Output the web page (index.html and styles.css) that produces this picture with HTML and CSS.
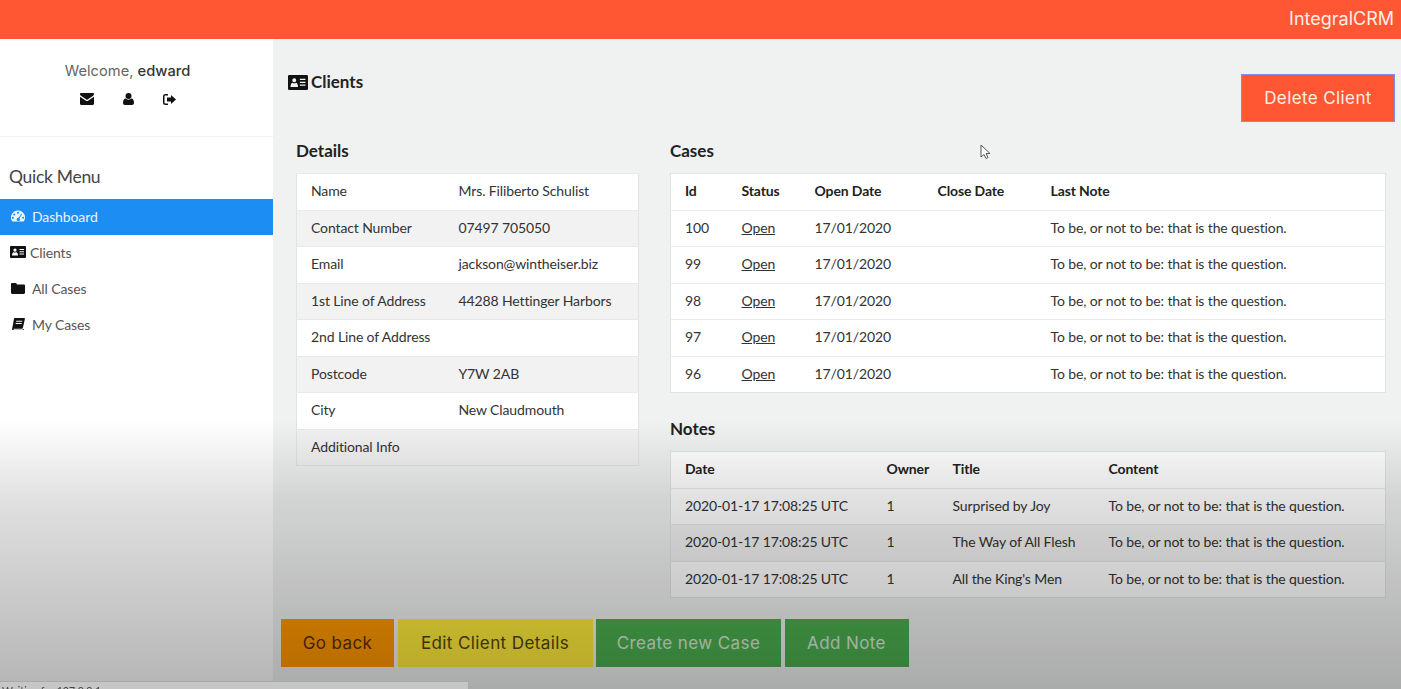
FILE: index.html
```html
<!DOCTYPE html>
<html lang="en">
<head>
<meta charset="UTF-8">
<title>IntegralCRM - Clients</title>
<link rel="stylesheet" href="styles.css">
</head>
<body>

<header class="topbar">IntegralCRM</header>

<div class="page">

	<aside class="sidebar">
		<div class="profile">
			<p class="welcome">Welcome, <b>edward</b></p>
			<div class="profile-icons">
				<svg class="icon" width="14" height="12" viewBox="0 0 14 12"><path d="M0 1.2C0 .5.5 0 1.2 0h11.6c.7 0 1.2.5 1.2 1.2 0 .6-.4 1.1-.9 1.5L7.6 6.6c-.4.3-.8.3-1.2 0L.9 2.7C.4 2.3 0 1.8 0 1.2zM0 3.7l6 4c.6.4 1.4.4 2 0l6-4v7.1c0 .7-.5 1.2-1.2 1.2H1.2C.5 12 0 11.500 0 10.800z"/></svg>
				<svg class="icon" width="11" height="12" viewBox="0 0 11 12"><circle cx="5.500" cy="3" r="3"/><path d="M0 10c0-3 1-4.500 2.700-4.500C3.500 6.200 4.400 6.700 5.500 6.700s2-.5 2.800-1.200C10 5.500 11 7 11 10c0 1.300-.8 2-2 2H2c-1.200 0-2-.7-2-2z"/></svg>
				<svg class="icon" width="13" height="11" viewBox="0 0 13 11"><path d="M5 1.500H2.500c-.6 0-1 .4-1 1v6c0 .6.400 1 1 1H5V11H2.500A2.500 2.500 0 0 1 0 8.500v-6A2.500 2.500 0 0 1 2.500 0H5zM8 1l5 4.500L8 10V7.500H4v-4h4z"/></svg>
			</div>
		</div>
		<h2 class="menu-title">Quick Menu</h2>
		<nav class="menu">
			<a class="menu-item active" href="#">
				<svg class="icon" width="14" height="12" viewBox="0 0 15 12"><path fill-rule="evenodd" d="M7.500 0A7.500 7.500 0 0 0 1.500 12h12A7.500 7.500 0 0 0 7.500 0zM7.500 1.500a1.100 1.100 0 1 1 0 2.200 1.100 1.100 0 0 1 0-2.200zM3.500 3.200a1.100 1.100 0 1 1 0 2.200 1.100 1.100 0 0 1 0-2.200zM2 6.800a1.100 1.100 0 1 1 0 2.200 1.100 1.100 0 0 1 0-2.200zM13 6.800a1.100 1.100 0 1 1 0 2.200 1.100 1.100 0 0 1 0-2.200zM11 3.600l.8.5-2.700 4.300a1.800 1.800 0 1 1-.9-.5z"/></svg>
				Dashboard
			</a>
			<a class="menu-item" href="#">
				<svg class="icon icon-card" width="16" height="12" viewBox="0 0 16 12"><path fill-rule="evenodd" d="M1 0h14a1 1 0 0 1 1 1v10a1 1 0 0 1-1 1H1a1 1 0 0 1-1-1V1a1 1 0 0 1 1-1zM5 2.500a1.600 1.600 0 1 0 0 3.200 1.600 1.600 0 0 0 0-3.200zM2 9.500h6c0-2-.8-3.300-1.600-3.300-.4.300-.9.400-1.400.4s-1-.1-1.400-.4C2.800 6.200 2 7.500 2 9.500zM9.500 3v1H14V3zM9.500 5.300v1H14v-1zM9.500 7.600v1H14v-1z"/></svg>
				Clients
			</a>
			<a class="menu-item" href="#">
				<svg class="icon" width="14" height="11" viewBox="0 0 14 11"><path d="M1.200 0h3.300c.6 0 1 .3 1.300.9l.3.600h7c.5 0 .9.400.9.900v7.400c0 .7-.5 1.200-1.200 1.200H1.200C.5 11 0 10.500 0 9.800V1.200C0 .5.500 0 1.200 0z"/></svg>
				All Cases
			</a>
			<a class="menu-item" href="#">
				<svg class="icon icon-book" width="13" height="12" viewBox="0 0 13 12"><path fill-rule="evenodd" d="M3 0h9.200c.6 0 .8.400.7 1l-2 8.800c-.1.600-.5.900-1 .9H2.200c-.6 0-.9.300-.9.500s.3.500.8.500h8.700l.4-.8.800.4-.5 1.200c-.1.300-.3.500-.7.500H2c-1.300 0-2-.8-1.900-1.900L1.900 1.200C2 .5 2.400 0 3 0zM4.300 2.800l-.2 1h6l.2-1zM3.800 5l-.2 1h6l.2-1z"/></svg>
				My Cases
			</a>
		</nav>
	</aside>

	<main class="content">
		<div class="title-row">
			<h1 class="page-title">
				<svg class="icon" width="20" height="15" viewBox="0 0 16 12"><path fill-rule="evenodd" d="M1 0h14a1 1 0 0 1 1 1v10a1 1 0 0 1-1 1H1a1 1 0 0 1-1-1V1a1 1 0 0 1 1-1zM5 2.500a1.600 1.600 0 1 0 0 3.200 1.600 1.600 0 0 0 0-3.200zM2 9.500h6c0-2-.8-3.300-1.600-3.300-.4.300-.9.400-1.400.4s-1-.1-1.400-.4C2.800 6.200 2 7.500 2 9.500zM9.500 3v1H14V3zM9.500 5.300v1H14v-1zM9.500 7.600v1H14v-1z"/></svg>
				Clients
			</h1>
			<a class="btn btn-delete" href="#">Delete Client</a>
		</div>

		<div class="columns">
			<section class="col-details">
				<h3 class="section-title">Details</h3>
				<table class="data striped">
					<colgroup><col class="w148"><col></colgroup>
					<tr><td>Name</td><td>Mrs. Filiberto Schulist</td></tr>
					<tr><td>Contact Number</td><td>07497 705050</td></tr>
					<tr><td>Email</td><td>jackson@wintheiser.biz</td></tr>
					<tr><td>1st Line of Address</td><td>44288 Hettinger Harbors</td></tr>
					<tr><td>2nd Line of Address</td><td></td></tr>
					<tr><td>Postcode</td><td>Y7W 2AB</td></tr>
					<tr><td>City</td><td>New Claudmouth</td></tr>
					<tr><td>Additional Info</td><td></td></tr>
				</table>
			</section>

			<section class="col-lists">
				<h3 class="section-title">Cases</h3>
				<table class="data">
					<colgroup><col class="w57"><col class="w73"><col class="w123"><col class="w113"><col></colgroup>
					<thead>
						<tr><th>Id</th><th>Status</th><th>Open Date</th><th>Close Date</th><th>Last Note</th></tr>
					</thead>
					<tbody>
						<tr><td>100</td><td><a href="#">Open</a></td><td>17/01/2020</td><td></td><td>To be, or not to be: that is the question.</td></tr>
						<tr><td>99</td><td><a href="#">Open</a></td><td>17/01/2020</td><td></td><td>To be, or not to be: that is the question.</td></tr>
						<tr><td>98</td><td><a href="#">Open</a></td><td>17/01/2020</td><td></td><td>To be, or not to be: that is the question.</td></tr>
						<tr><td>97</td><td><a href="#">Open</a></td><td>17/01/2020</td><td></td><td>To be, or not to be: that is the question.</td></tr>
						<tr><td>96</td><td><a href="#">Open</a></td><td>17/01/2020</td><td></td><td>To be, or not to be: that is the question.</td></tr>
					</tbody>
				</table>

				<h3 class="section-title notes-title">Notes</h3>
				<table class="data striped-body">
					<colgroup><col class="w202"><col class="w66"><col class="w156"><col></colgroup>
					<thead>
						<tr><th>Date</th><th>Owner</th><th>Title</th><th>Content</th></tr>
					</thead>
					<tbody>
						<tr><td>2020-01-17 17:08:25 UTC</td><td>1</td><td>Surprised by Joy</td><td>To be, or not to be: that is the question.</td></tr>
						<tr><td>2020-01-17 17:08:25 UTC</td><td>1</td><td>The Way of All Flesh</td><td>To be, or not to be: that is the question.</td></tr>
						<tr><td>2020-01-17 17:08:25 UTC</td><td>1</td><td>All the King's Men</td><td>To be, or not to be: that is the question.</td></tr>
					</tbody>
				</table>
			</section>
		</div>

		<div class="actions">
			<a class="btn btn-back" href="#">Go back</a>
			<a class="btn btn-edit" href="#">Edit Client Details</a>
			<a class="btn btn-create" href="#">Create new Case</a>
			<a class="btn btn-note" href="#">Add Note</a>
		</div>
	</main>
</div>

<!-- things from the screen recording that sit on top of the page -->
<svg class="cursor" width="11" height="16" viewBox="0 0 11 16"><path d="M1 1v12l3-2.500 2 4 2-1-2-4h4z" fill="#fff" stroke="#555" stroke-width="1"/></svg>
<div class="shade"></div>
<div class="statusbar">Waiting for 127.0.0.1</div>

</body>
</html>
```

FILE: styles.css
```css
* {
	box-sizing: border-box;
}

html, body {
	height: 100%;
}

body {
	margin: 0;
	overflow: hidden;
	background-color: #f0f1f1;
	color: #333;
	font-family: "Lato", "Liberation Sans", sans-serif;
	font-size: 14px;
	letter-spacing: -0.12px;
}

a {
	color: inherit;
}

.icon {
	flex: none;
	fill: #111;
}

.topbar {
	height: 39px;
	padding-right: 7px;
	background-color: #ff5733;
	color: #fdeee8;
	font-family: "Inter", sans-serif;
	font-size: 18px;
	letter-spacing: 0;
	line-height: 38px;
	text-align: right;
}

.page {
	display: flex;
	height: 650px;
}

/* sidebar */
.sidebar {
	width: 273px;
	flex: none;
	background-color: #fff;
}

.profile {
	height: 98px;
	padding: 24px 18px 0 0;
	border-bottom: 1px solid #f3f3f3;
	text-align: center;
}

.welcome {
	margin: 0;
	color: #666;
	font-family: "Inter", sans-serif;
	font-size: 14.700px;
	letter-spacing: 0;
	line-height: 17px;
}

.welcome b {
	color: #333;
	font-weight: 500;
}

.profile-icons {
	display: flex;
	justify-content: center;
	align-items: center;
	gap: 29px;
	margin-top: 13px;
	height: 12px;
}

.menu-title {
	margin: 29px 0 11px 9px;
	color: #444;
	font-size: 17.500px;
	font-weight: 400;
	letter-spacing: -0.3px;
	line-height: 22px;
}

.menu-item {
	display: flex;
	align-items: center;
	gap: 5px;
	height: 36px;
	padding: 0 0 2px 10px;
	color: #555;
	font-size: 14px;
	text-decoration: none;
}

.menu-item .icon {
	margin-left: 1px;
	margin-right: 2px;
}

.menu-item .icon-card {
	margin-left: 0;
	margin-right: -1px;
}

.menu-item .icon-book {
	margin-left: 2px;
}

.menu-item.active {
	background-color: #1c8ef3;
	color: #eaf4fd;
}

.menu-item.active .icon {
	fill: #eaf4fd;
}

/* main part */
.content {
	flex: 1;
	padding: 0 6px 0 8px;
	min-width: 0;
}

.title-row {
	display: flex;
	justify-content: space-between;
	align-items: flex-start;
	height: 101px;
	padding-top: 34px;
}

.page-title {
	display: flex;
	align-items: center;
	gap: 3px;
	margin: 0 0 0 7px;
	color: #222;
	font-size: 17px;
	font-weight: 700;
	letter-spacing: 0;
	line-height: 18px;
}

.columns {
	display: flex;
	gap: 31px;
	padding: 0 9px 0 15px;
	height: 479px;
}

.col-details {
	width: 343px;
	flex: none;
}

.col-lists {
	flex: 1;
	min-width: 0;
}

.section-title {
	margin: 0 0 11px;
	color: #222;
	font-size: 17px;
	font-weight: 700;
	letter-spacing: 0;
	line-height: 22px;
}

.notes-title {
	margin-top: 25px;
}

/* tables */
.data {
	width: 100%;
	border-collapse: collapse;
	table-layout: fixed;
	background-color: #fff;
	border: 1px solid #e2e3e3;
}

.data td, .data th {
	height: 36.500px;
	padding: 0 0 2px 14px;
	border-top: 1px solid #e8e9e9;
	font-weight: 400;
	text-align: left;
	white-space: nowrap;
}

.data th {
	color: #222;
	font-weight: 700;
	border-top: 0;
}

.striped tr:nth-child(even) td {
	background-color: #f2f2f2;
}

.striped-body tbody tr:nth-child(even) td {
	background-color: #f2f2f2;
}

.w57 { width: 57px; }
.w66 { width: 66px; }
.w73 { width: 73px; }
.w113 { width: 113px; }
.w123 { width: 123px; }
.w148 { width: 148px; }
.w156 { width: 156px; }
.w202 { width: 202px; }

/* buttons */
.actions {
	display: flex;
	gap: 3.500px;
	height: 48px;
}

.btn {
	display: flex;
	align-items: center;
	justify-content: center;
	height: 48px;
	font-family: "Inter", sans-serif;
	font-size: 17px;
	letter-spacing: 0.4px;
	text-decoration: none;
	border: 1px solid transparent;
}

.btn-delete {
	width: 154px;
	margin-top: 1px;
	background-color: #ff5733;
	border-color: #7d8fe6;
	color: #fdeee8;
}

.btn-back {
	width: 113px;
	background-color: #ff9800;
	color: #5a2f00;
}

.btn-edit {
	width: 195px;
	background-color: #ffeb3b;
	color: #4d4510;
}

.btn-create {
	width: 185px;
	background-color: #4caf50;
	color: #d8ecd9;
}

.btn-note {
	width: 124px;
	background-color: #4caf50;
	color: #d8ecd9;
}

/* recording overlays */
.shade {
	position: fixed;
	left: 0;
	right: 0;
	top: 420px;
	bottom: 0;
	background: linear-gradient(rgba(0, 0, 0, 0), rgba(0, 0, 0, 0.12) 30%, rgba(0, 0, 0, 0.29));
	pointer-events: none;
}

.cursor {
	position: fixed;
	left: 980px;
	top: 144px;
}

.statusbar {
	position: fixed;
	left: 0;
	bottom: -6px;
	width: 469px;
	height: 14px;
	padding: 3px 0 0 2px;
	background-color: #c6c6c6;
	border-top: 1px solid #a9a9a9;
	border-right: 1px solid #a9a9a9;
	color: #444;
	font-size: 10.600px;
	letter-spacing: 0;
	line-height: 13px;
}
```
